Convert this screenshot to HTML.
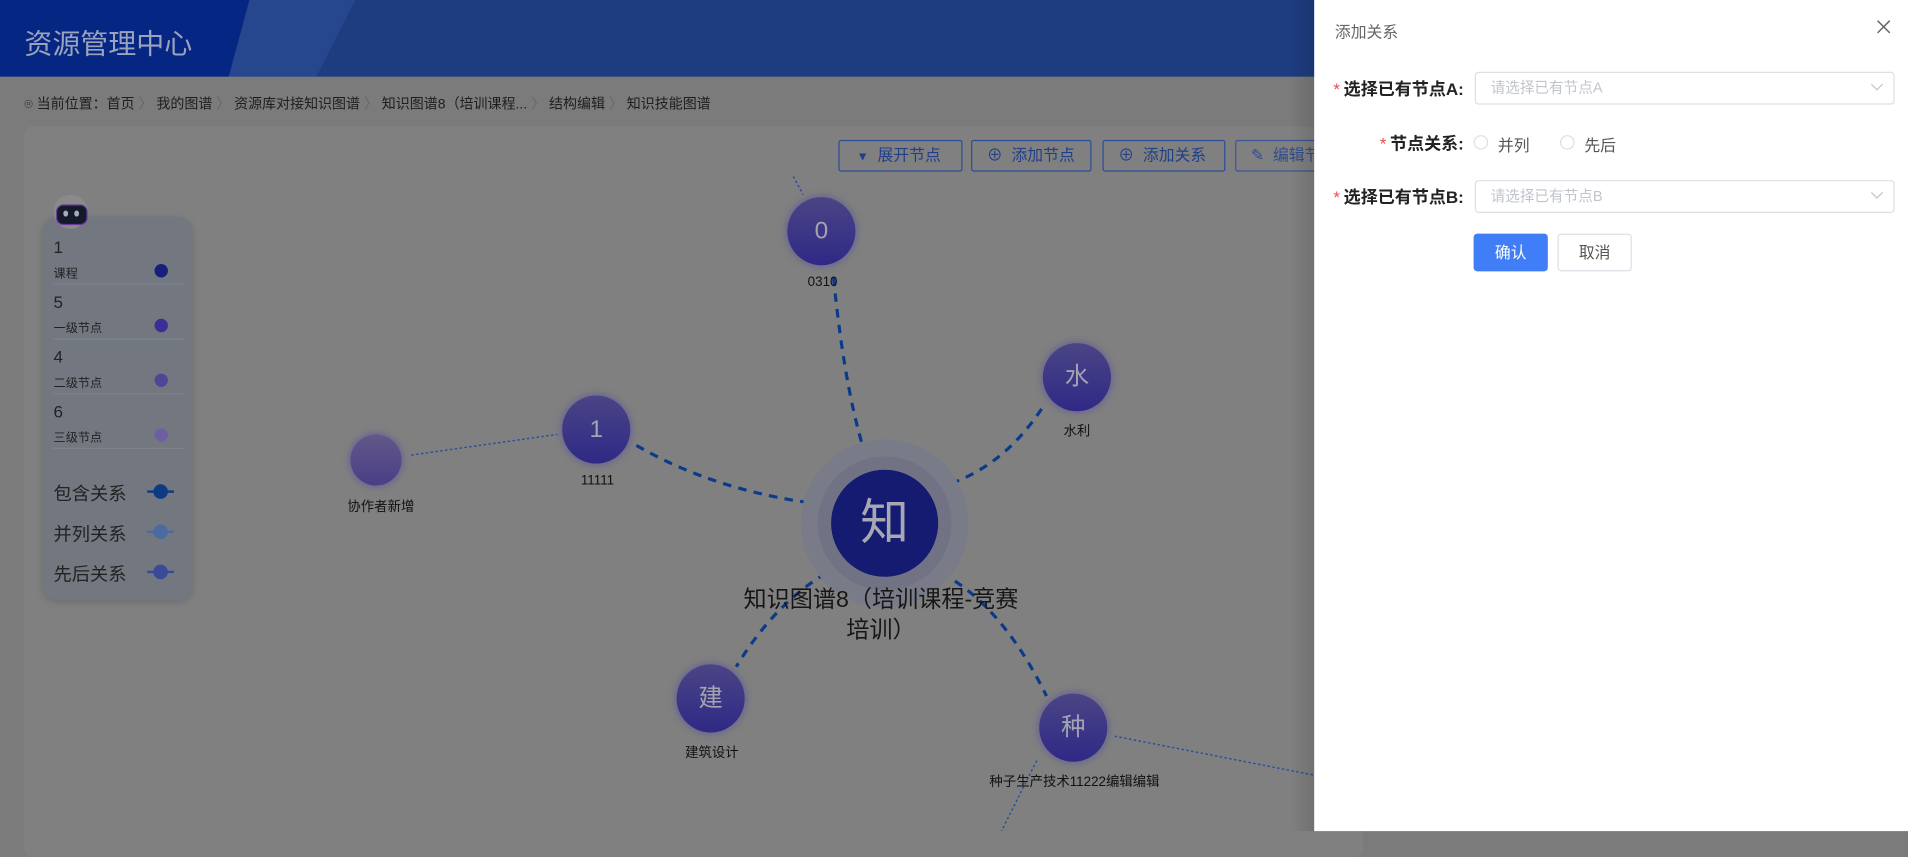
<!DOCTYPE html>
<html><head><meta charset="utf-8"><style>
html,body{margin:0;padding:0;width:1908px;height:831px;overflow:hidden;background:#7b7b7b;}
#w{position:absolute;left:0;top:0;width:1568px;height:683px;transform:scale(1.21684);transform-origin:0 0;font-family:"Liberation Sans","Noto Sans CJK SC",sans-serif;}
.a{position:absolute;white-space:nowrap}
.btn{position:absolute;top:115px;height:24px;border:1px solid #2c4c98;border-radius:2px;color:#1f3f8a;font-size:13px;line-height:24px;box-sizing:content-box}
.node{position:absolute;border-radius:50%;background:linear-gradient(#4a4585,#2f2986);box-shadow:0 0 5px 2px rgba(90,80,160,.5);color:#a4a4b0;text-align:center}
.lbl{position:absolute;font-size:11px;color:#111;transform:translateX(-50%);white-space:nowrap}
.lg{position:absolute;left:44px;font-size:12px;color:#222}
.sep{position:absolute;left:44px;width:108px;height:1px;background:#7e838b}
.dot{position:absolute;left:127px;width:11px;height:11px;border-radius:50%}
.rel{position:absolute;left:44px;font-size:15px;color:#222}
.rl{position:absolute;left:121px;width:22px;height:2px}
.rd{position:absolute;left:126px;width:12px;height:12px;border-radius:50%}
.fl{position:absolute;font-size:14px;font-weight:bold;color:#222;text-align:right;width:120px}
.fl b{color:#f04b4b;font-weight:normal;margin-right:3px}
.sel{position:absolute;left:1212px;width:343px;height:25px;border:1px solid #dcdfe6;border-radius:3px;font-size:12px;color:#c0c4cc;line-height:25px;box-sizing:content-box}
.sel span{margin-left:12px}
.sel i{position:absolute;right:10px;top:6px;width:6px;height:6px;border-right:1px solid #c0c4cc;border-bottom:1px solid #c0c4cc;transform:rotate(45deg)}
.rad{position:absolute;top:111px;width:10px;height:10px;border:1px solid #dcdfe6;border-radius:50%}
</style></head><body><div id="w">
<!-- header -->
<div class="a" style="left:0;top:0;width:1568px;height:63px;background:#1e3c80"></div>
<svg class="a" style="left:0;top:0" width="400" height="63"><polygon points="0,0 205,0 188,63 0,63" fill="#062684"/><polygon points="205,0 292,0 260,63 188,63" fill="#26478e"/></svg>
<div class="a" style="left:20px;top:17px;font-size:23px;color:#9aa3bb">资源管理中心</div>
<!-- breadcrumb -->
<div class="a" style="left:20px;top:77px;font-size:11.5px;color:#1e1e1e">⌾ 当前位置：首页 <span style="color:#666">〉</span> 我的图谱 <span style="color:#666">〉</span> 资源库对接知识图谱 <span style="color:#666">〉</span> 知识图谱8（培训课程... <span style="color:#666">〉</span> 结构编辑 <span style="color:#666">〉</span> 知识技能图谱</div>
<!-- card -->
<div class="a" style="left:20px;top:104px;width:1100px;height:600px;background:#808080;border-radius:6px"></div>
<div class="btn" style="left:689px;width:100px"><span style="margin-left:14px;font-size:10px">▼</span>&nbsp;&nbsp;展开节点</div>
<div class="btn" style="left:798px;width:97px"><span style="margin-left:12px">⊕</span>&nbsp;&nbsp;添加节点</div>
<div class="btn" style="left:906px;width:99px"><span style="margin-left:12px">⊕</span>&nbsp;&nbsp;添加关系</div>
<div class="btn" style="left:1015px;width:100px;border-color:#3a5696;color:#2f4d8c"><span style="margin-left:12px">✎</span>&nbsp;&nbsp;编辑节点</div>
<!-- graph lines -->
<svg class="a" style="left:0;top:0" width="1080" height="683">
<g fill="none" stroke="#0c3a8a" stroke-width="2.6" stroke-dasharray="7,6">
<path d="M685,228 Q695,330 715,385"/>
<path d="M523,366 Q590,405 680,415"/>
<path d="M856,336 Q820,390 765,402"/>
<path d="M690,465 Q640,490 605,548"/>
<path d="M762,465 Q820,490 860,572"/>
</g>
<g fill="none" stroke="#27509a" stroke-width="1.2" stroke-dasharray="2,2">
<path d="M338,374 L458,357"/>
<path d="M916,605 L1080,637"/>
<path d="M852,625 L823,683"/>
<path d="M652,145 L660,160"/>
</g>
<circle cx="727" cy="430" r="69" fill="#7a7b88"/>
<circle cx="727" cy="430" r="55" fill="#717384"/>
<circle cx="727" cy="430" r="44" fill="#141b70"/>
</svg>
<div class="a" style="left:683px;top:404px;width:88px;text-align:center;font-size:40px;color:#a8a8b4;line-height:52px">知</div>
<div class="node" style="left:647px;top:162px;width:56px;height:56px;line-height:56px;font-size:20px">0</div>
<div class="node" style="left:462px;top:325px;width:56px;height:56px;line-height:56px;font-size:20px">1</div>
<div class="node" style="left:857px;top:282px;width:56px;height:56px;line-height:56px;font-size:20px">水</div>
<div class="node" style="left:556px;top:546px;width:56px;height:56px;line-height:56px;font-size:20px">建</div>
<div class="node" style="left:854px;top:570px;width:56px;height:56px;line-height:56px;font-size:20px">种</div>
<div class="node" style="left:288px;top:357px;width:42px;height:42px;background:linear-gradient(#625888,#4a3e86)"></div>
<div class="lbl" style="left:676px;top:226px">0310</div>
<div class="lbl" style="left:491px;top:389px">11111</div>
<div class="lbl" style="left:885px;top:346px">水利</div>
<div class="lbl" style="left:585px;top:610px">建筑设计</div>
<div class="lbl" style="left:883px;top:634px">种子生产技术11222编辑编辑</div>
<div class="lbl" style="left:313px;top:408px">协作者新增</div>
<div class="lbl" style="left:724px;top:481px;font-size:19px;color:#161616;text-align:center;line-height:25px">知识图谱8（培训课程-竞赛<br>培训）</div>
<!-- legend -->
<div class="a" style="left:35px;top:178px;width:123px;height:315px;background:#737880;border-radius:12px;box-shadow:0 2px 6px rgba(0,0,0,.15)"></div>
<div class="a" style="left:44px;top:160px;width:28px;height:28px;border-radius:50%;background:#8a8a8c"></div>
<div class="a" style="left:46px;top:168px;width:24px;height:15px;border-radius:6px;background:#141a2a;border:1px solid #6a3a9a"></div>
<div class="a" style="left:52px;top:173px;width:4px;height:5px;border-radius:50%;background:#aab"></div>
<div class="a" style="left:61px;top:173px;width:4px;height:5px;border-radius:50%;background:#aab"></div>
<div class="lg" style="top:195px;font-size:14px">1</div><div class="lg" style="top:216px;font-size:10px">课程</div><div class="dot" style="top:217px;background:#171f7c"></div><div class="sep" style="top:233px"></div>
<div class="lg" style="top:240px;font-size:14px">5</div><div class="lg" style="top:261px;font-size:10px">一级节点</div><div class="dot" style="top:262px;background:#3a2f98"></div><div class="sep" style="top:278px"></div>
<div class="lg" style="top:285px;font-size:14px">4</div><div class="lg" style="top:306px;font-size:10px">二级节点</div><div class="dot" style="top:307px;background:#514598"></div><div class="sep" style="top:323px"></div>
<div class="lg" style="top:330px;font-size:14px">6</div><div class="lg" style="top:351px;font-size:10px">三级节点</div><div class="dot" style="top:352px;background:#6e5ea4"></div><div class="sep" style="top:368px"></div>
<div class="rel" style="top:395px">包含关系</div><div class="rl" style="top:403px;background:#0d3a82"></div><div class="rd" style="top:398px;background:#0d3a82"></div>
<div class="rel" style="top:428px">并列关系</div><div class="rl" style="top:436px;background:#4a6aa0"></div><div class="rd" style="top:431px;background:#4a6aa0"></div>
<div class="rel" style="top:461px">先后关系</div><div class="rl" style="top:469px;background:#3a4a9a"></div><div class="rd" style="top:464px;background:#3a4a9a"></div>
<!-- panel -->
<div class="a" style="left:1060px;top:0;width:20px;height:683px;background:linear-gradient(90deg,rgba(0,0,0,0),rgba(0,0,0,.12))"></div>
<div class="a" style="left:1080px;top:0;width:488px;height:683px;background:#fff"></div>
<div class="a" style="left:1097px;top:16px;font-size:13px;color:#666">添加关系</div>
<svg class="a" style="left:1542px;top:16px" width="12" height="12"><path d="M1,1L11,11M11,1L1,11" stroke="#666" stroke-width="1.2"/></svg>
<div class="fl" style="left:1083px;top:63px"><b>*</b>选择已有节点A:</div>
<div class="sel" style="top:59px"><span>请选择已有节点A</span><i></i></div>
<div class="fl" style="left:1083px;top:108px"><b>*</b>节点关系:</div>
<div class="rad" style="left:1211px"></div><div class="a" style="left:1231px;top:109px;font-size:13px;color:#555">并列</div>
<div class="rad" style="left:1282px"></div><div class="a" style="left:1302px;top:109px;font-size:13px;color:#555">先后</div>
<div class="fl" style="left:1083px;top:152px"><b>*</b>选择已有节点B:</div>
<div class="sel" style="top:148px"><span>请选择已有节点B</span><i></i></div>
<div class="a" style="left:1211px;top:192px;width:61px;height:31px;background:#3f7ef6;border-radius:3px;color:#fff;font-size:13px;line-height:31px;text-align:center">确认</div>
<div class="a" style="left:1280px;top:192px;width:59px;height:29px;border:1px solid #dcdfe6;border-radius:3px;color:#555;font-size:13px;line-height:29px;text-align:center">取消</div>
</div></body></html>
